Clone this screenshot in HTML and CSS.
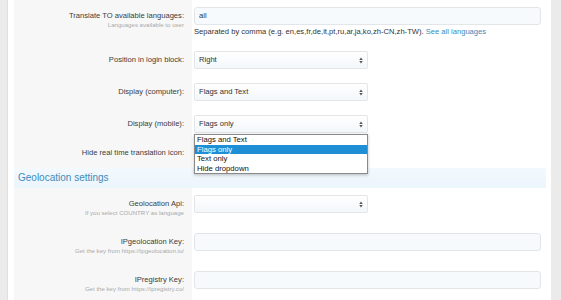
FILE: index.html
```html
<!DOCTYPE html>
<html>
<head>
<meta charset="utf-8">
<link rel="stylesheet" href="styles.css">
</head>
<body>
<div class="page">
  <div class="card">
    <div class="row r1">
      <div class="lab"><div class="lt">Translate TO available languages:</div><div class="ls">Languages available to user</div></div>
      <div class="ctl">
        <div class="txt">all</div>
        <div class="help">Separated by comma (e.g. en,es,fr,de,it,pt,ru,ar,ja,ko,zh-CN,zh-TW). <a class="link">See all languages</a></div>
      </div>
    </div>
    <div class="row r2">
      <div class="lab"><div class="lt">Position in login block:</div></div>
      <div class="ctl"><div class="sel"><span>Right</span><svg class="arr" width="4" height="7" viewBox="0 0 4 7"><path d="M0.3 3 L2 0.5 L3.7 3 Z M0.3 4 L2 6.5 L3.7 4 Z" fill="#555"/></svg></div></div>
    </div>
    <div class="row r2">
      <div class="lab"><div class="lt">Display (computer):</div></div>
      <div class="ctl"><div class="sel"><span>Flags and Text</span><svg class="arr" width="4" height="7" viewBox="0 0 4 7"><path d="M0.3 3 L2 0.5 L3.7 3 Z M0.3 4 L2 6.5 L3.7 4 Z" fill="#555"/></svg></div></div>
    </div>
    <div class="row r2">
      <div class="lab"><div class="lt">Display (mobile):</div></div>
      <div class="ctl">
        <div class="sel"><span>Flags only</span><svg class="arr" width="4" height="7" viewBox="0 0 4 7"><path d="M0.3 3 L2 0.5 L3.7 3 Z M0.3 4 L2 6.5 L3.7 4 Z" fill="#555"/></svg></div>
        <ul class="dropdown">
          <li>Flags and Text</li>
          <li class="hl">Flags only</li>
          <li>Text only</li>
          <li>Hide dropdown</li>
        </ul>
      </div>
    </div>
    <div class="row r5">
      <div class="lab lab5"><div class="lt">Hide real time translation icon:</div></div>
      <div class="ctl"><div class="chk"></div></div>
    </div>
    <div class="section">Geolocation settings</div>
    <div class="row r6">
      <div class="lab"><div class="lt">Geolocation Api:</div><div class="ls">If you select COUNTRY as language</div></div>
      <div class="ctl"><div class="sel"><span></span><svg class="arr" width="4" height="7" viewBox="0 0 4 7"><path d="M0.3 3 L2 0.5 L3.7 3 Z M0.3 4 L2 6.5 L3.7 4 Z" fill="#555"/></svg></div></div>
    </div>
    <div class="row r6">
      <div class="lab"><div class="lt">IPgeolocation Key:</div><div class="ls">Get the key from https://ipgeolocation.io/</div></div>
      <div class="ctl"><div class="txt"></div></div>
    </div>
    <div class="row r6">
      <div class="lab"><div class="lt">IPregistry Key:</div><div class="ls">Get the key from https://ipregistry.co/</div></div>
      <div class="ctl"><div class="txt"></div></div>
    </div>
  </div>
</div>
</body>
</html>
```

FILE: styles.css
```css
html, body {
  margin: 0;
  padding: 0;
  height: 300px;
  overflow: hidden;
}
body {
  background: #ebebeb;
  font-family: "Liberation Sans", Arial, sans-serif;
  color: #333;
}
.page {
  display: flex;
  height: 300px;
}
.card {
  margin-left: 7px;
  border-left: 1px solid #e0e0e0;
  width: 544px;
  background: #fff;
  padding: 0 5px 0 6px;
  box-sizing: border-box;
  height: 300px;
}
.row {
  display: grid;
  grid-template-columns: 178px 1fr;
}
.r1 { height: 44px; }
.r2 { height: 32px; }
.r5 { height: 28px; }
.r6 { height: 38px; }
.lab {
  background: #f7f7f7;
  text-align: right;
  padding: 11px 8px 0 0;
}
.lt {
  font-size: 7.6px;
  line-height: 10px;
  color: #3c3c3c;
}
.ls {
  font-size: 6.1px;
  line-height: 8px;
  color: #aaa;
}
.lab5 { padding-top: 8px; }
.ctl {
  padding: 7px 5px 0 2px;
  position: relative;
}
.txt {
  height: 18px;
  box-sizing: border-box;
  border: 1px solid #e2e6e9;
  border-radius: 3px;
  background: #f7fafd;
  font-size: 7.6px;
  line-height: 16px;
  padding-left: 4px;
  color: #333;
}
.help {
  margin-top: 1.5px;
  font-size: 7.6px;
  line-height: 9px;
  color: #333;
  white-space: nowrap;
}
.link { color: #3b89ba; }
.sel {
  width: 174px;
  height: 18px;
  box-sizing: border-box;
  border: 1px solid #e2e6e9;
  border-radius: 2px;
  background: linear-gradient(to bottom, #ffffff, #f3f7fa);
  font-size: 7.6px;
  line-height: 16px;
  padding-left: 4px;
  color: #333;
  display: flex;
  justify-content: space-between;
  align-items: center;
}
.arr { margin-right: 4px; }
.chk {
  width: 10px;
  height: 10px;
  border: 1px solid #ccc;
  margin-top: -1px;
}
.dropdown {
  position: absolute;
  left: 2px;
  top: 26px;
  width: 174px;
  box-sizing: border-box;
  margin: 0;
  padding: 0;
  list-style: none;
  background: #fff;
  border: 1px solid #8a8a8a;
  box-shadow: 0 1px 3px rgba(0,0,0,0.25);
  z-index: 5;
}
.dropdown li {
  font-size: 7.7px;
  line-height: 9.5px;
  height: 9.5px;
  padding-left: 2px;
  color: #111;
}
.dropdown li.hl {
  background: #1e8fd5;
  color: #fff;
}
.section {
  height: 20px;
  background: linear-gradient(to bottom, #f3f9fd, #ebf5fc);
  color: #3f8bbb;
  font-size: 10px;
  line-height: 20px;
  padding-left: 4px;
}
```
